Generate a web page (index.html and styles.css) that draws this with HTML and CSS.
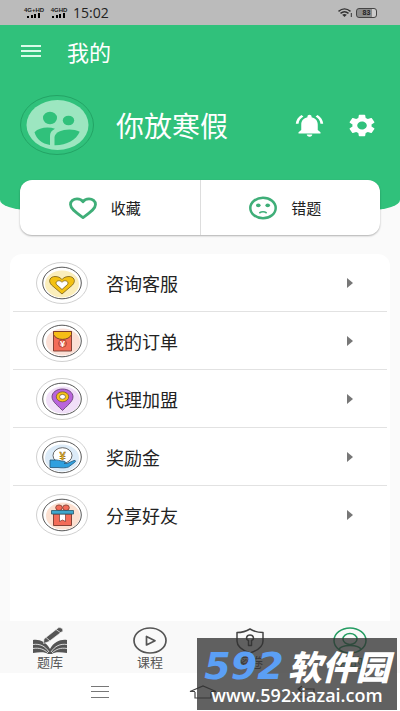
FILE: index.html
```html
<!DOCTYPE html>
<html lang="zh-CN">
<head>
    <meta charset="UTF-8">
    <meta name="viewport" content="width=device-width, initial-scale=1.0">
    <title>我的</title>
    <link rel="stylesheet" href="styles.css">
</head>
<body>
    <!-- Status bar -->
    <div class="status-bar">
        <div class="signal">
            <span class="net">4G+HD</span>
            <svg width="14" height="5" viewBox="0 0 14 5"><path d="M0 3h2v2H0zM4 2h2v3H4zM7 1h2v4H7zM11 0h2v5h-2z"/></svg>
        </div>
        <div class="signal">
            <span class="net">4GHD</span>
            <svg width="14" height="5" viewBox="0 0 14 5"><path d="M0 3h2v2H0zM4 2h2v3H4zM7 1h2v4H7zM11 0h2v5h-2z"/></svg>
        </div>
        <span class="time">15:02</span>
        <svg class="wifi" width="15" height="10" viewBox="0 0 15 10" fill="none" stroke="#333" stroke-width="1.4">
            <path d="M.5 3.4Q6.500-1.600 12.500 3.400M2.500 5.400Q6.500 2 10.500 5.400"/>
            <path d="M4.200 6.800Q6.500 5 8.800 6.800L6.500 9z" fill="#333" stroke="none"/>
            <path d="M13.300 5v4" stroke-width="1"/>
        </svg>
        <div class="battery">83</div>
    </div>

    <!-- Green header -->
    <header class="header">
        <div class="toolbar">
            <button class="icon-btn" aria-label="菜单">
                <svg width="20" height="12" viewBox="0 0 20 12" fill="#d9fbe9"><path d="M0 0h20v2H0zM0 5h20v2H0zM0 10h20v2H0z"/></svg>
            </button>
            <h1>我的</h1>
        </div>
        <div class="profile">
            <svg class="avatar" width="74" height="60" viewBox="0 0 74 60">
                <ellipse cx="37" cy="30" rx="36.500" ry="29.500" fill="none" stroke="#1f9c5f" stroke-width=".8"/>
                <ellipse cx="37.500" cy="30" rx="31" ry="25" fill="#9ce6c0"/>
                <g fill="#30c17b">
                    <ellipse cx="30" cy="23" rx="7" ry="6.200"/>
                    <ellipse cx="48.500" cy="25.500" rx="5.700" ry="4.800"/>
                    <path d="M14.500 37.300C19 32.500 28 31.500 35 33.800C31.500 35.500 30 38 30 41V50C22 48.800 16.500 44 14.500 37.300z"/>
                    <path d="M34.500 50.200V42C35 35 51 32 59.700 36.800C56.500 45 46 50.500 34.500 50.200z"/>
                </g>
            </svg>
            <span class="name">你放寒假</span>
            <button class="icon-btn" aria-label="通知">
                <svg width="33" height="27" viewBox="0 0 24 24" preserveAspectRatio="none" fill="#fff"><path d="M7.580 4.080L6.150 2.650C3.750 4.480 2.170 7.300 2.030 10.500h2c.15-2.650 1.510-4.970 3.550-6.420zm12.390 6.420h2c-.15-3.200-1.730-6.020-4.120-7.850l-1.420 1.430c2.020 1.450 3.390 3.770 3.540 6.420zM18 11c0-3.070-1.640-5.640-4.500-6.320V4c0-.83-.67-1.500-1.500-1.500s-1.500.67-1.500 1.500v.68C7.630 5.360 6 7.920 6 11v5l-2 2v1h16v-1l-2-2v-5zm-6 11c.14 0 .27-.01.4-.04.65-.14 1.180-.58 1.440-1.180.1-.24.15-.5.15-.78h-4c.01 1.100.9 2 2.010 2z"/></svg>
            </button>
            <button class="icon-btn settings" aria-label="设置">
                <svg width="32" height="27" viewBox="0 0 24 24" preserveAspectRatio="none" fill="#fff"><path d="M19.140 12.940c.04-.3.06-.61.06-.94 0-.32-.02-.64-.07-.94l2.030-1.580c.18-.14.23-.41.12-.61l-1.920-3.320c-.12-.22-.37-.29-.59-.22l-2.390.96c-.5-.38-1.030-.7-1.620-.94l-.36-2.540c-.04-.24-.24-.41-.48-.41h-3.840c-.24 0-.43.17-.47.41l-.36 2.540c-.59.24-1.130.57-1.620.94l-2.390-.96c-.22-.08-.47 0-.59.22L2.740 8.870c-.12.21-.08.47.12.61l2.030 1.580c-.05.3-.09.63-.09.94s.02.64.07.94l-2.030 1.580c-.18.14-.23.41-.12.61l1.920 3.320c.12.22.37.29.59.22l2.390-.96c.5.38 1.030.7 1.620.94l.36 2.540c.05.24.24.41.48.41h3.840c.24 0 .44-.17.47-.41l.36-2.540c.59-.24 1.130-.56 1.620-.94l2.390.96c.22.08.47 0 .59-.22l1.920-3.320c.12-.22.07-.47-.12-.61l-2.010-1.580zM12 15.600c-1.980 0-3.600-1.620-3.600-3.600s1.620-3.600 3.600-3.600 3.600 1.620 3.600 3.600-1.620 3.600-3.600 3.600z"/></svg>
            </button>
        </div>
    </header>

    <!-- Quick links card -->
    <div class="quick">
        <a href="#">
            <svg width="28" height="24" viewBox="0 0 28 24" fill="none" stroke="#3fae78" stroke-width="2.800" stroke-linejoin="round"><path d="M14 21.500C7 16.500 1.500 13 1.500 8.500C1.500 5.200 4.500 2.800 8 2.800C10.500 2.800 12.800 3.800 14 5.800C15.200 3.800 17.500 2.800 20 2.800C23.500 2.800 26.500 5.200 26.500 8.500C26.500 13 21 16.500 14 21.500z"/></svg>
            <span>收藏</span>
        </a>
        <a href="#">
            <svg width="28" height="24" viewBox="0 0 28 24"><ellipse cx="14" cy="12" rx="12.700" ry="10.300" fill="none" stroke="#3fae78" stroke-width="2.500"/><g fill="#3fae78"><ellipse cx="9.300" cy="9.300" rx="2.300" ry="1.900"/><ellipse cx="18.700" cy="9.300" rx="2.300" ry="1.900"/></g><path d="M10.300 17Q14 14.500 17.700 17" fill="none" stroke="#3fae78" stroke-width="1.600"/></svg>
            <span>错题</span>
        </a>
    </div>

    <!-- Menu list -->
    <main class="menu">
        <a href="#">
            <svg class="badge" width="52" height="42" viewBox="0 0 52 42">
                <ellipse cx="26" cy="21" rx="25.500" ry="20.500" fill="#fff" stroke="#bbb" stroke-width=".7"/>
                <ellipse cx="26" cy="22" rx="17" ry="13.500" fill="#fbeebb"/>
                <ellipse cx="26" cy="21" rx="19.300" ry="15.800" fill="none" stroke="#444" stroke-width=".9"/>
                <path d="M26 32L15.500 23C11.500 18.500 14.500 14.500 19 14.500C22 14.500 24.500 15.500 26 17.500C27.500 15.500 30 14.500 33 14.500C37.500 14.500 40.500 18.500 36.500 23z" fill="#f3c112" stroke="#775d15" stroke-width=".8"/>
                <path d="M26 27.500L20.500 22.500C18.500 19.500 23.500 17 26 20.300C28.500 17 33.500 19.500 31.500 22.500z" fill="#fff" stroke="#775d15" stroke-width=".8"/>
            </svg>
            <span>咨询客服</span>
            <i class="arrow"></i>
        </a>
        <a href="#">
            <svg class="badge" width="52" height="42" viewBox="0 0 52 42">
                <ellipse cx="26" cy="21" rx="25.500" ry="20.500" fill="#fff" stroke="#bbb" stroke-width=".7"/>
                <ellipse cx="27" cy="22" rx="17" ry="13.500" fill="#fce0d6"/>
                <ellipse cx="26" cy="21" rx="19.300" ry="15.800" fill="none" stroke="#444" stroke-width=".9"/>
                <path d="M17.500 11.500h18v19.500h-18z" fill="#f36c58" stroke="#77382c" stroke-width=".9"/>
                <path d="M17.500 11.500h18v3C33 21 20 21 17.500 14.500z" fill="#f6bd16" stroke="#77382c" stroke-width=".9"/>
                <ellipse cx="26.500" cy="23.500" rx="4" ry="3.800" fill="#e8604c" stroke="#77382c" stroke-width=".5"/>
                <text x="26.500" y="27" class="yen" fill="#fff">¥</text>
            </svg>
            <span>我的订单</span>
            <i class="arrow"></i>
        </a>
        <a href="#">
            <svg class="badge" width="52" height="42" viewBox="0 0 52 42">
                <ellipse cx="26" cy="21" rx="25.500" ry="20.500" fill="#fff" stroke="#bbb" stroke-width=".7"/>
                <ellipse cx="27" cy="22" rx="17" ry="13.500" fill="#f1dff8"/>
                <ellipse cx="26" cy="21" rx="19.300" ry="15.800" fill="none" stroke="#444" stroke-width=".9"/>
                <path d="M26.500 32.500C23 28.500 16 24 16 18.800C16 14.500 20.500 11 26.500 11S37 14.500 37 18.800C37 24 30 28.500 26.500 32.500z" fill="#b964dc" stroke="#5b3768" stroke-width=".8"/>
                <ellipse cx="26.500" cy="18.800" rx="6.200" ry="5" fill="#f7c31a" stroke="#6e551c" stroke-width=".7"/>
                <ellipse cx="26.500" cy="18.800" rx="3" ry="2.400" fill="#fff" stroke="#6e551c" stroke-width=".7"/>
            </svg>
            <span>代理加盟</span>
            <i class="arrow"></i>
        </a>
        <a href="#">
            <svg class="badge" width="52" height="42" viewBox="0 0 52 42">
                <ellipse cx="26" cy="21" rx="25.500" ry="20.500" fill="#fff" stroke="#bbb" stroke-width=".7"/>
                <ellipse cx="26" cy="22" rx="17" ry="13.500" fill="#dcebf8"/>
                <ellipse cx="26" cy="21" rx="19.300" ry="15.800" fill="none" stroke="#444" stroke-width=".9"/>
                <ellipse cx="26.500" cy="19.500" rx="9.500" ry="7.800" fill="#fff" stroke="#444" stroke-width=".8"/>
                <text x="26.500" y="23.500" class="yen gold" fill="#f3b71c">¥</text>
                <path d="M14 24h4C21 23.500 24 25 28 25.300C30 25.500 30 27 28 27.300L31 27.500L38 24.500C40 24 40 25.500 38.500 26.500L32.500 31C30 32 26 32 22 31.500H14z" fill="#2fa0df" stroke="#245577" stroke-width=".8"/>
            </svg>
            <span>奖励金</span>
            <i class="arrow"></i>
        </a>
        <a href="#">
            <svg class="badge" width="52" height="42" viewBox="0 0 52 42">
                <ellipse cx="26" cy="21" rx="25.500" ry="20.500" fill="#fff" stroke="#bbb" stroke-width=".7"/>
                <ellipse cx="27" cy="22" rx="17" ry="13.500" fill="#fce0d0"/>
                <ellipse cx="26" cy="21" rx="19.300" ry="15.800" fill="none" stroke="#444" stroke-width=".9"/>
                <ellipse cx="23" cy="13.700" rx="3.300" ry="2.800" fill="#f36c58" stroke="#77382c" stroke-width=".8"/>
                <ellipse cx="30" cy="13.700" rx="3.300" ry="2.800" fill="#f36c58" stroke="#77382c" stroke-width=".8"/>
                <path d="M17.500 20h18v11.500h-18z" fill="#f36c58" stroke="#77382c" stroke-width=".9"/>
                <path d="M23.500 20h6v7.500l-3-1.500l-3 1.500z" fill="#fff" stroke="#77382c" stroke-width=".7"/>
                <path d="M15.500 16.500h22v3.500h-22z" fill="#3fa7cc" stroke="#27586c" stroke-width=".8"/>
            </svg>
            <span>分享好友</span>
            <i class="arrow"></i>
        </a>
    </main>

    <!-- Tabs -->
    <nav class="tabs">
        <a href="#">
            <svg width="34" height="27" viewBox="0 0 34 27" fill="#555">
                <path d="M0 13C6 12 13 14.500 17 22C21 14.500 28 12 34 13V26C27 24.500 21 25 19 27H15C13 25 7 24.500 0 26z"/>
                <path d="M0 17.500C7 16.500 12 19 16 25M0 21.500C6 20.500 11 22 15 26M34 17.500C27 16.500 22 19 18 25M34 21.500C28 20.500 23 22 19 26" fill="none" stroke="#f9f9f9" stroke-width=".8"/>
                <path d="M11 12L25 1C27-.3 31 2 29.500 4.200L16 14.500L10.500 16.500z" stroke="#f9f9f9" stroke-width=".6"/>
                <path d="M23 2.500L28 6M13 10.500L17 14" stroke="#f9f9f9" stroke-width=".7"/>
            </svg>
            <span>题库</span>
        </a>
        <a href="#">
            <svg width="34" height="27" viewBox="0 0 34 27" fill="none" stroke="#555" stroke-width="1.700" stroke-linejoin="round">
                <ellipse cx="17" cy="13.500" rx="16" ry="12.500"/><path d="M13.500 9.500V18L22 13.700z"/>
            </svg>
            <span>课程</span>
        </a>
        <a href="#">
            <svg width="34" height="27" viewBox="0 0 34 27" fill="none" stroke="#444" stroke-width="1.500" stroke-linejoin="round">
                <path d="M17 2C13 4.500 9 5.500 4 5.500V14C4 20 11 24 17 26C23 24 30 20 30 14V5.500C25 5.500 21 4.500 17 2z"/>
                <path d="M15.500 13.500C12.500 12.500 13 8 17 8S21.500 12.500 18.500 13.500V18.500H15.500z"/>
            </svg>
            <span>密卷</span>
        </a>
        <a href="#" class="active">
            <svg width="34" height="27" viewBox="0 0 34 27" fill="none" stroke="#249c62" stroke-width="1.500">
                <ellipse cx="17" cy="13.500" rx="16" ry="12.500"/><ellipse cx="17" cy="12" rx="7" ry="5.500"/><path d="M6 22.500C8 17 26 17 28 22.500"/>
            </svg>
            <span>我的</span>
        </a>
    </nav>

    <!-- System navigation -->
    <div class="system-nav">
        <button class="icon-btn" aria-label="最近任务">
            <svg width="18" height="12" viewBox="0 0 18 12" stroke="#777" stroke-width="1"><path d="M0 .5h18M0 5.500h18M0 11.500h18"/></svg>
        </button>
        <button class="icon-btn" aria-label="主页">
            <svg width="28" height="14" viewBox="0 0 28 14" fill="none" stroke="#444" stroke-width="1.200"><path d="M6 6.500H1L14 1L27 6.500H22M6 7V13H22V7"/></svg>
        </button>
        <button class="icon-btn" aria-label="返回">
            <svg width="20" height="14" viewBox="0 0 20 14" fill="none" stroke="#444" stroke-width="1.200"><path d="M6 1L2 4L6 7M2 4H18V12H4"/></svg>
        </button>
    </div>

    <!-- Site watermark -->
    <div class="watermark">
        <p class="brand"><span class="num">592</span><span class="word">软件园</span></p>
        <p class="site">www.592xiazai.com</p>
    </div>
</body>
</html>
```
FILE: styles.css
```css
* {
    margin: 0;
    padding: 0;
    box-sizing: border-box;
}

body {
    position: relative;
    min-height: 100vh;
    display: flex;
    flex-direction: column;
    background: #fafafa;
    color: #222;
    font-family: "Noto Sans CJK SC", sans-serif;
    overflow-x: hidden;
}

a {
    color: inherit;
    text-decoration: none;
}

svg {
    display: block;
    flex-shrink: 0;
}

.icon-btn {
    background: none;
    border: none;
    cursor: pointer;
}

/* status bar */
.status-bar {
    height: 25px;
    padding: 0 23px;
    display: flex;
    align-items: center;
    gap: 3px;
    background: #bbb;
}

.signal {
    width: 22px;
    display: flex;
    flex-direction: column;
    align-items: center;
}

.net {
    font: bold 6px/6px "Liberation Sans", sans-serif;
}

.time {
    font: 14px/20px "Open Sans", sans-serif;
}

.wifi {
    margin-left: auto;
}

.battery {
    width: 21px;
    height: 10px;
    border: 1px solid #444;
    border-radius: 3px;
    background: linear-gradient(to right, #8c8c8c 80%, #ccc 80%);
    font: bold 7px/8px "Liberation Sans", sans-serif;
    text-align: center;
}

/* header */
.header {
    height: 185px;
    background: #30c17b;
    border-radius: 0 0 30px 30px / 0 0 10px 10px;
    color: #fff;
}

.toolbar {
    height: 52px;
    padding: 0 21px;
    display: flex;
    align-items: center;
    gap: 26px;
}

.toolbar h1 {
    font-size: 22px;
    line-height: 30px;
    font-weight: 400;
}

.profile {
    padding: 18px 22px 0 20px;
    display: flex;
    align-items: center;
}

.name {
    flex: 1;
    margin-left: 22px;
    font-size: 28px;
    line-height: 40px;
    white-space: nowrap;
}

.settings {
    margin-left: 20px;
}

/* quick links */
.quick {
    height: 55px;
    margin: -30px 20px 0;
    display: flex;
    background: #fff;
    border-radius: 12px;
    box-shadow: 0 1px 2px rgba(0, 0, 0, 0.3);
}

.quick a {
    flex: 1;
    display: flex;
    align-items: center;
    justify-content: center;
    gap: 14px;
    padding-right: 10px;
    font-size: 15px;
}

.quick a:first-child {
    border-right: 1px solid #ddd;
}

/* menu */
.menu {
    flex: 1;
    margin: 19px 10px 0;
    padding: 0 3px;
    background: #fff;
    border-radius: 12px 12px 0 0;
}

.menu a {
    height: 58px;
    padding: 0 34px 0 23px;
    display: flex;
    align-items: center;
    gap: 18px;
    border-bottom: 1px solid #e2e2e2;
    font-size: 18px;
}

.menu a:last-child {
    border-bottom: none;
}

.arrow {
    margin-left: auto;
    border-left: 6px solid #777;
    border-top: 5px solid transparent;
    border-bottom: 5px solid transparent;
}

.yen {
    font: bold 9px "Liberation Sans", sans-serif;
    text-anchor: middle;
}

.gold {
    font-size: 11px;
    stroke: #6e551c;
    stroke-width: 0.4px;
}

/* tabs */
.tabs {
    height: 52px;
    padding-top: 6px;
    display: flex;
    background: #f9f9f9;
}

.tabs a {
    flex: 1;
    display: flex;
    flex-direction: column;
    align-items: center;
    font-size: 13px;
    line-height: 16px;
    color: #555;
}

.tabs .active {
    color: #249c62;
}

.system-nav {
    height: 38px;
    display: flex;
    align-items: center;
    justify-content: space-between;
    padding: 0 84px 0 91px;
    background: #fff;
}

/* watermark lies over the bottom bars */
.watermark {
    position: absolute;
    right: 3px;
    bottom: 1px;
    width: 200px;
    height: 72px;
    padding-top: 10px;
    background: rgba(50, 50, 50, 0.77);
    color: #fff;
    text-align: center;
}

.brand {
    display: flex;
    align-items: center;
    justify-content: center;
    gap: 4px;
    line-height: 36px;
    font-style: italic;
    font-weight: 900;
    white-space: nowrap;
}

.num {
    color: #5b9ff5;
    font-family: "DejaVu Sans", sans-serif;
    font-size: 38px;
}

.word {
    font-size: 34px;
}

.site {
    font: 600 18px/22px "Open Sans", sans-serif;
}
```
